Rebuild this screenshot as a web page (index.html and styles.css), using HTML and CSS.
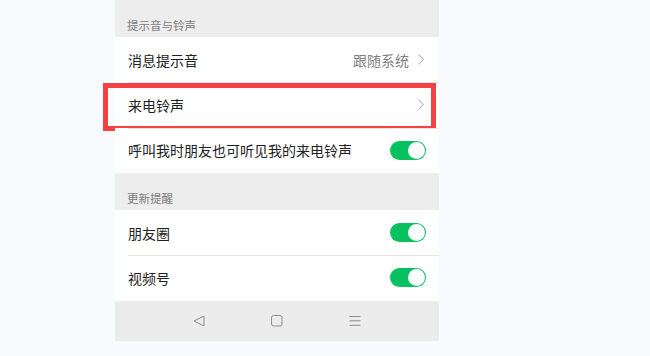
FILE: index.html
```html
<!DOCTYPE html>
<html lang="zh-CN">
<head>
<meta charset="utf-8">
<link rel="stylesheet" href="styles.css">
</head>
<body>
<div class="phone">
  <div class="section-title">提示音与铃声</div>
  <div class="row">
    <span class="label">消息提示音</span>
    <span class="value">跟随系统</span>
    <svg class="chev" width="6" height="11" viewBox="0 0 6 11"><path d="M0.7 0.6 L5.2 5.5 L0.7 10.4" fill="none" stroke="#b4b4b4" stroke-width="1.1"/></svg>
  </div>
  <div class="row row-marked">
    <span class="label">来电铃声</span>
    <svg class="chev" width="6" height="11" viewBox="0 0 6 11"><path d="M0.7 0.6 L5.2 5.5 L0.7 10.4" fill="none" stroke="#b4b4b4" stroke-width="1.1"/></svg>
    <div class="mark"></div>
  </div>
  <div class="row">
    <span class="label">呼叫我时朋友也可听见我的来电铃声</span>
    <span class="switch"><span class="knob"></span></span>
  </div>
  <div class="section-title">更新提醒</div>
  <div class="row">
    <span class="label">朋友圈</span>
    <span class="switch"><span class="knob"></span></span>
  </div>
  <div class="row">
    <span class="label">视频号</span>
    <span class="switch"><span class="knob"></span></span>
  </div>
  <div class="navbar">
    <span class="nav-cell"><svg width="12" height="12" viewBox="0 0 12 12"><path d="M11 1 L1 6 L11 11 Z" fill="none" stroke="#8c8c8c" stroke-width="1" stroke-linejoin="round"/></svg></span>
    <span class="nav-cell"><svg width="12" height="12" viewBox="0 0 12 12"><rect x="0.5" y="0.5" width="10.5" height="10.5" rx="2" fill="none" stroke="#8c8c8c" stroke-width="1"/></svg></span>
    <span class="nav-cell"><svg width="12" height="12" viewBox="0 0 12 12"><path d="M0.5 1.5 H11.5 M0.5 5.8 H11.5 M0.5 10.3 H11.5" fill="none" stroke="#8c8c8c" stroke-width="1"/></svg></span>
  </div>
</div>
</body>
</html>
```
FILE: styles.css
```css
html, body {
  margin: 0;
  padding: 0;
  background: #f9fafe;
}
body {
  font-family: "Noto Sans CJK SC", "Noto Sans", sans-serif;
  color: #222222;
}
.phone {
  width: 324px;
  margin-left: 115px;
  background: #ededed;
}
.section-title {
  height: 37px;
  box-sizing: border-box;
  padding: 0 12px 5px;
  display: flex;
  align-items: flex-end;
  font-size: 11.5px;
  line-height: 14px;
  color: #7d7d7d;
  background: #ededed;
}
.row {
  position: relative;
  height: 45.34px;
  box-sizing: border-box;
  padding: 0 14px 0 13px;
  display: flex;
  align-items: center;
  background: #ffffff;
  font-size: 14px;
  line-height: 18px;
}
.row + .row {
  background: linear-gradient(#e6e6e6, #e6e6e6) 13px 0 / calc(100% - 13px) 1px no-repeat, #ffffff;
}
.label {
  flex: 1;
}
.value {
  color: #7f7f7f;
  margin-right: 9px;
}
.chev {
  display: block;
  margin-right: 1px;
}
.switch {
  position: relative;
  width: 36px;
  height: 19px;
  border-radius: 10px;
  background: #07c160;
  margin-right: -1px;
}
.knob {
  position: absolute;
  right: 1px;
  top: 1px;
  width: 17px;
  height: 17px;
  border-radius: 50%;
  background: #ffffff;
}
.mark {
  position: absolute;
  left: -12px;
  right: 3px;
  top: 1px;
  bottom: -3px;
  border: 5px solid #f44141;
}
.navbar {
  height: 40px;
  display: flex;
  justify-content: center;
  align-items: center;
  background: #ececec;
}
.nav-cell {
  width: 78px;
  display: flex;
  justify-content: center;
}
.nav-cell svg {
  display: block;
}
```
